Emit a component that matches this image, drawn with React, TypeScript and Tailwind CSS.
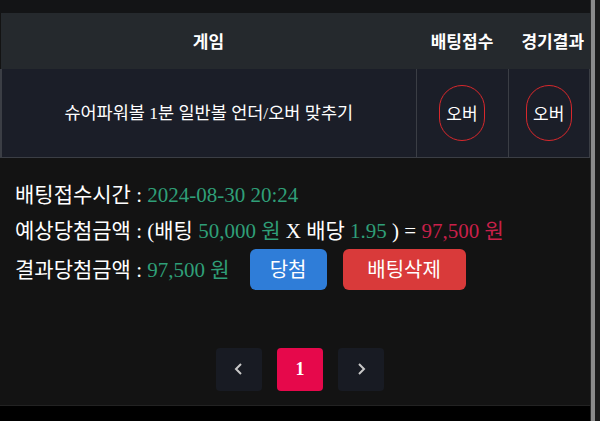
export default function App() {
  return (
    <div
      className="w-[600px] h-[421px] flex bg-[#131313] text-white overflow-hidden"
      style={{ fontFamily: '"Liberation Serif", "Noto Sans CJK KR", serif' }}
    >
      <div className="flex-1 flex flex-col">
        {/* top band */}
        <div className="h-[13px] bg-[#131416]" />

        {/* table */}
        <table className="w-full border-collapse" style={{ fontFamily: '"Noto Sans CJK KR", sans-serif' }}>
          <thead>
            <tr className="h-[56px] bg-[#25292d] text-[17px] font-bold">
              <th className="w-[415px] text-center">게임</th>
              <th className="w-[92px] text-center">배팅접수</th>
              <th className="text-center pl-[8px]">경기결과</th>
            </tr>
          </thead>
          <tbody>
            <tr className="h-[88px] bg-[#1b1e28] text-[17px] border-b border-[#3b3e45]">
              <td className="text-center border-l-2 border-[#3b3e45]">
                <span
                  className="text-[17.5px]"
                  style={{ fontFamily: '"Liberation Serif", "Noto Sans CJK KR", serif' }}
                >
                  슈어파워볼 1분 일반볼 언더/오버 맞추기
                </span>
              </td>
              <td className="border-l border-[#3b3e45]">
                <div className="mx-auto w-[46px] h-[56px] rounded-full border-[1.5px] border-[#d8282c] flex items-center justify-center">
                  오버
                </div>
              </td>
              <td className="border-l border-[#3b3e45] border-r">
                <div className="mx-auto w-[46px] h-[56px] rounded-full border-[1.5px] border-[#d8282c] flex items-center justify-center">
                  오버
                </div>
              </td>
            </tr>
          </tbody>
        </table>

        {/* bet info */}
        <div className="flex-1 flex flex-col">
          <div className="pl-[15px] pt-[20px] flex flex-col text-[21px] leading-[30px]">
            <div>
              <span className="font-['Noto_Sans_CJK_KR'] text-[21px]">배팅접수시간</span> :{' '}
              <span className="text-[#2f9f78]">2024-08-30 20:24</span>
            </div>
            <div className="mt-[4px]">
              <span className="font-['Noto_Sans_CJK_KR'] text-[21px]">예상당첨금액</span> : (
              <span className="font-['Noto_Sans_CJK_KR'] text-[21px]">배팅</span>{' '}
              <span className="text-[#2f9f78]">50,000 원</span> X{' '}
              <span className="font-['Noto_Sans_CJK_KR'] text-[21px]">배당</span>{' '}
              <span className="text-[#2f9f78]">1.95</span> ) ={' '}
              <span className="text-[#c9204a]">97,500 원</span>
            </div>
            <div className="mt-[3px] flex items-center">
              <span>
                <span className="font-['Noto_Sans_CJK_KR'] text-[21px]">결과당첨금액</span> :{' '}
                <span className="text-[#2f9f78]">97,500 원</span>
              </span>
              <button className="ml-[20px] w-[77px] h-[41px] rounded-md bg-[#2f7dd8] text-white font-['Noto_Sans_CJK_KR'] text-[20px]">
                당첨
              </button>
              <button className="ml-[16px] w-[123px] h-[41px] rounded-md bg-[#d93a3a] text-white font-['Noto_Sans_CJK_KR'] text-[20px]">
                배팅삭제
              </button>
            </div>
          </div>

          {/* pagination */}
          <div className="flex justify-center gap-[15px] mt-[58px] pl-[10px]">
            <button className="w-[46px] h-[43px] rounded-sm bg-[#181b23] flex items-center justify-center">
              <svg width="10" height="14" viewBox="0 0 10 14" fill="none" stroke="#c8c8c8" strokeWidth="2">
                <path d="M7 2L2 7l5 5" />
              </svg>
            </button>
            <button className="w-[46px] h-[43px] rounded-sm bg-[#e6084b] text-white font-bold text-[18px]">1</button>
            <button className="w-[46px] h-[43px] rounded-sm bg-[#181b23] flex items-center justify-center">
              <svg width="10" height="14" viewBox="0 0 10 14" fill="none" stroke="#c8c8c8" strokeWidth="2">
                <path d="M3 2l5 5-5 5" />
              </svg>
            </button>
          </div>
        </div>

        {/* bottom band */}
        <div className="h-[16px] bg-black border-t border-[#222]" />
      </div>

      {/* right scrollbar strip */}
      <div className="w-[10px] flex bg-[#1a1a1a]">
        <div className="w-[1px] bg-[#2a2a2a]" />
        <div className="w-[4px] bg-[#8a8a8a]" />
      </div>
    </div>
  );
}
